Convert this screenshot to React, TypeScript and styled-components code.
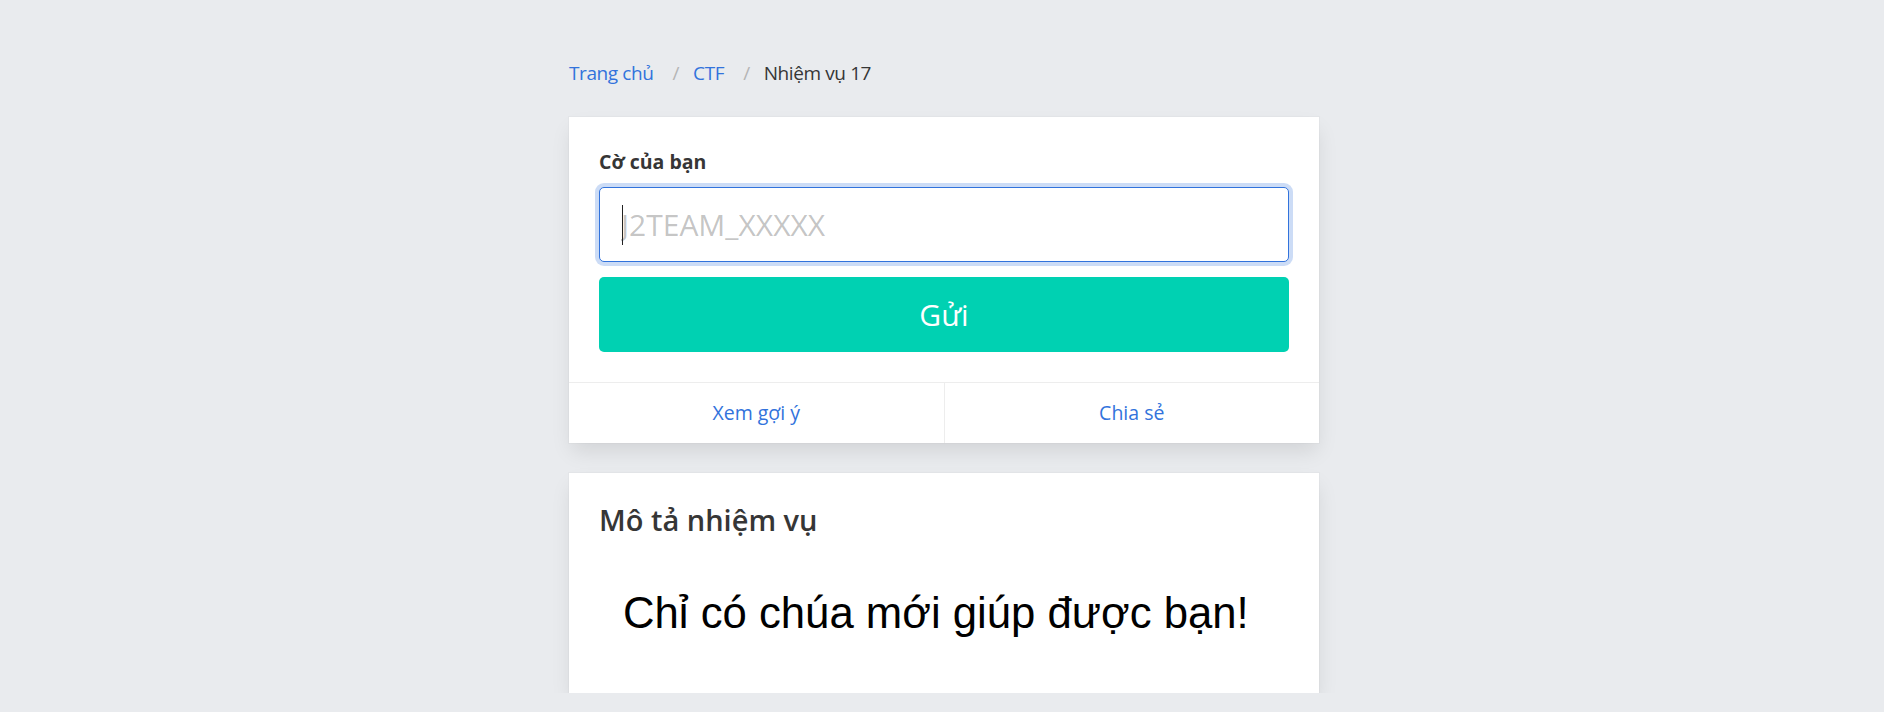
import React from "react";
import styled, { createGlobalStyle } from "styled-components";

const GlobalStyle = createGlobalStyle`
  html, body {
    margin: 0;
    padding: 0;
    background-color: #e9ebee;
  }

  body {
    font-family: "Open Sans", "Noto Sans", sans-serif;
    font-size: 20px;
    color: #4a4a4a;
  }

  * {
    box-sizing: border-box;
  }
`;

const LINK = "#3273dc";

const Section = styled.section`
  padding: 58px 0 0;
`;

const Container = styled.div`
  width: 750px;
  margin: 0 auto;
  position: relative;
  left: 2px;
`;

const Breadcrumb = styled.nav`
  display: flex;
  align-items: center;
  height: 30px;
  line-height: 30px;
  margin-bottom: 29px;
  font-size: 19px;
  letter-spacing: -0.4px;
`;

const Crumb = styled.a<{ $active?: boolean }>`
  color: ${({ $active }) => ($active ? "#363636" : LINK)};
  text-decoration: none;
  cursor: ${({ $active }) => ($active ? "default" : "pointer")};
`;

const Separator = styled.span`
  color: #b5b5b5;
  margin: 0 14px 0 19px;
  &::after {
    content: "/";
  }
`;

const Card = styled.div`
  background: #fff;
  box-shadow: 0 10px 20px -2.5px rgba(10, 10, 10, 0.1),
    0 0 0 1px rgba(10, 10, 10, 0.02);
  margin-bottom: 30px;

  &:last-child {
    margin-bottom: 0;
  }
`;

const CardContent = styled.div`
  padding: 30px;
`;

const Label = styled.label`
  display: block;
  font-weight: 700;
  color: #363636;
  font-size: 19.5px;
  line-height: 30px;
  margin-bottom: 10px;
`;

const Field = styled.div`
  position: relative;
  margin-bottom: 15px;
`;

const Input = styled.input`
  display: block;
  width: 100%;
  height: 75px;
  font-family: inherit;
  font-size: 30px;
  color: #363636;
  padding: 0 21px;
  border: 1px solid ${LINK};
  border-radius: 5px;
  box-shadow: 0 0 0 4px rgba(50, 115, 220, 0.25);
  outline: none;
  caret-color: transparent;

  &::placeholder {
    color: rgba(54, 54, 54, 0.3);
  }
`;

const Caret = styled.span`
  position: absolute;
  left: 23px;
  top: 18px;
  width: 1px;
  height: 40px;
  background: #222;
  pointer-events: none;
`;

const SubmitButton = styled.button`
  display: flex;
  align-items: center;
  justify-content: center;
  width: 100%;
  height: 75px;
  border: none;
  border-radius: 5px;
  background-color: #00d1b2;
  color: #fff;
  font-family: inherit;
  font-size: 30px;
  cursor: pointer;
`;

const CardFooter = styled.footer`
  display: flex;
  border-top: 1px solid #ededed;
`;

const FooterItem = styled.a`
  flex: 1;
  display: flex;
  align-items: center;
  justify-content: center;
  padding: 15px;
  line-height: 30px;
  font-size: 19.5px;
  color: ${LINK};
  text-decoration: none;
  cursor: pointer;

  &:not(:last-child) {
    border-right: 1px solid #ededed;
  }
`;

const Title = styled.h2`
  margin: 0 0 30px;
  font-size: 29px;
  font-weight: 600;
  line-height: 34px;
  color: #363636;
`;

const Description = styled.div`
  padding: 12px 0 16px 24px;
  font-family: "Liberation Sans", Arial, sans-serif;
  font-size: 43.7px;
  line-height: 68px;
  color: #000;
`;

const App = (): JSX.Element => {
  return (
    <>
      <GlobalStyle />
      <Section>
        <Container>
          <Breadcrumb>
            <Crumb>Trang chủ</Crumb>
            <Separator />
            <Crumb>CTF</Crumb>
            <Separator />
            <Crumb $active>Nhiệm vụ 17</Crumb>
          </Breadcrumb>

          <Card>
            <CardContent>
              <Label htmlFor="flag">Cờ của bạn</Label>
              <Field>
                <Input id="flag" placeholder="J2TEAM_XXXXX" autoFocus />
                <Caret />
              </Field>
              <SubmitButton>Gửi</SubmitButton>
            </CardContent>
            <CardFooter>
              <FooterItem>Xem gợi ý</FooterItem>
              <FooterItem>Chia sẻ</FooterItem>
            </CardFooter>
          </Card>

          <Card>
            <CardContent>
              <Title>Mô tả nhiệm vụ</Title>
              <Description>Chỉ có chúa mới giúp được bạn!</Description>
            </CardContent>
          </Card>
        </Container>
      </Section>
    </>
  );
};

export default App;
